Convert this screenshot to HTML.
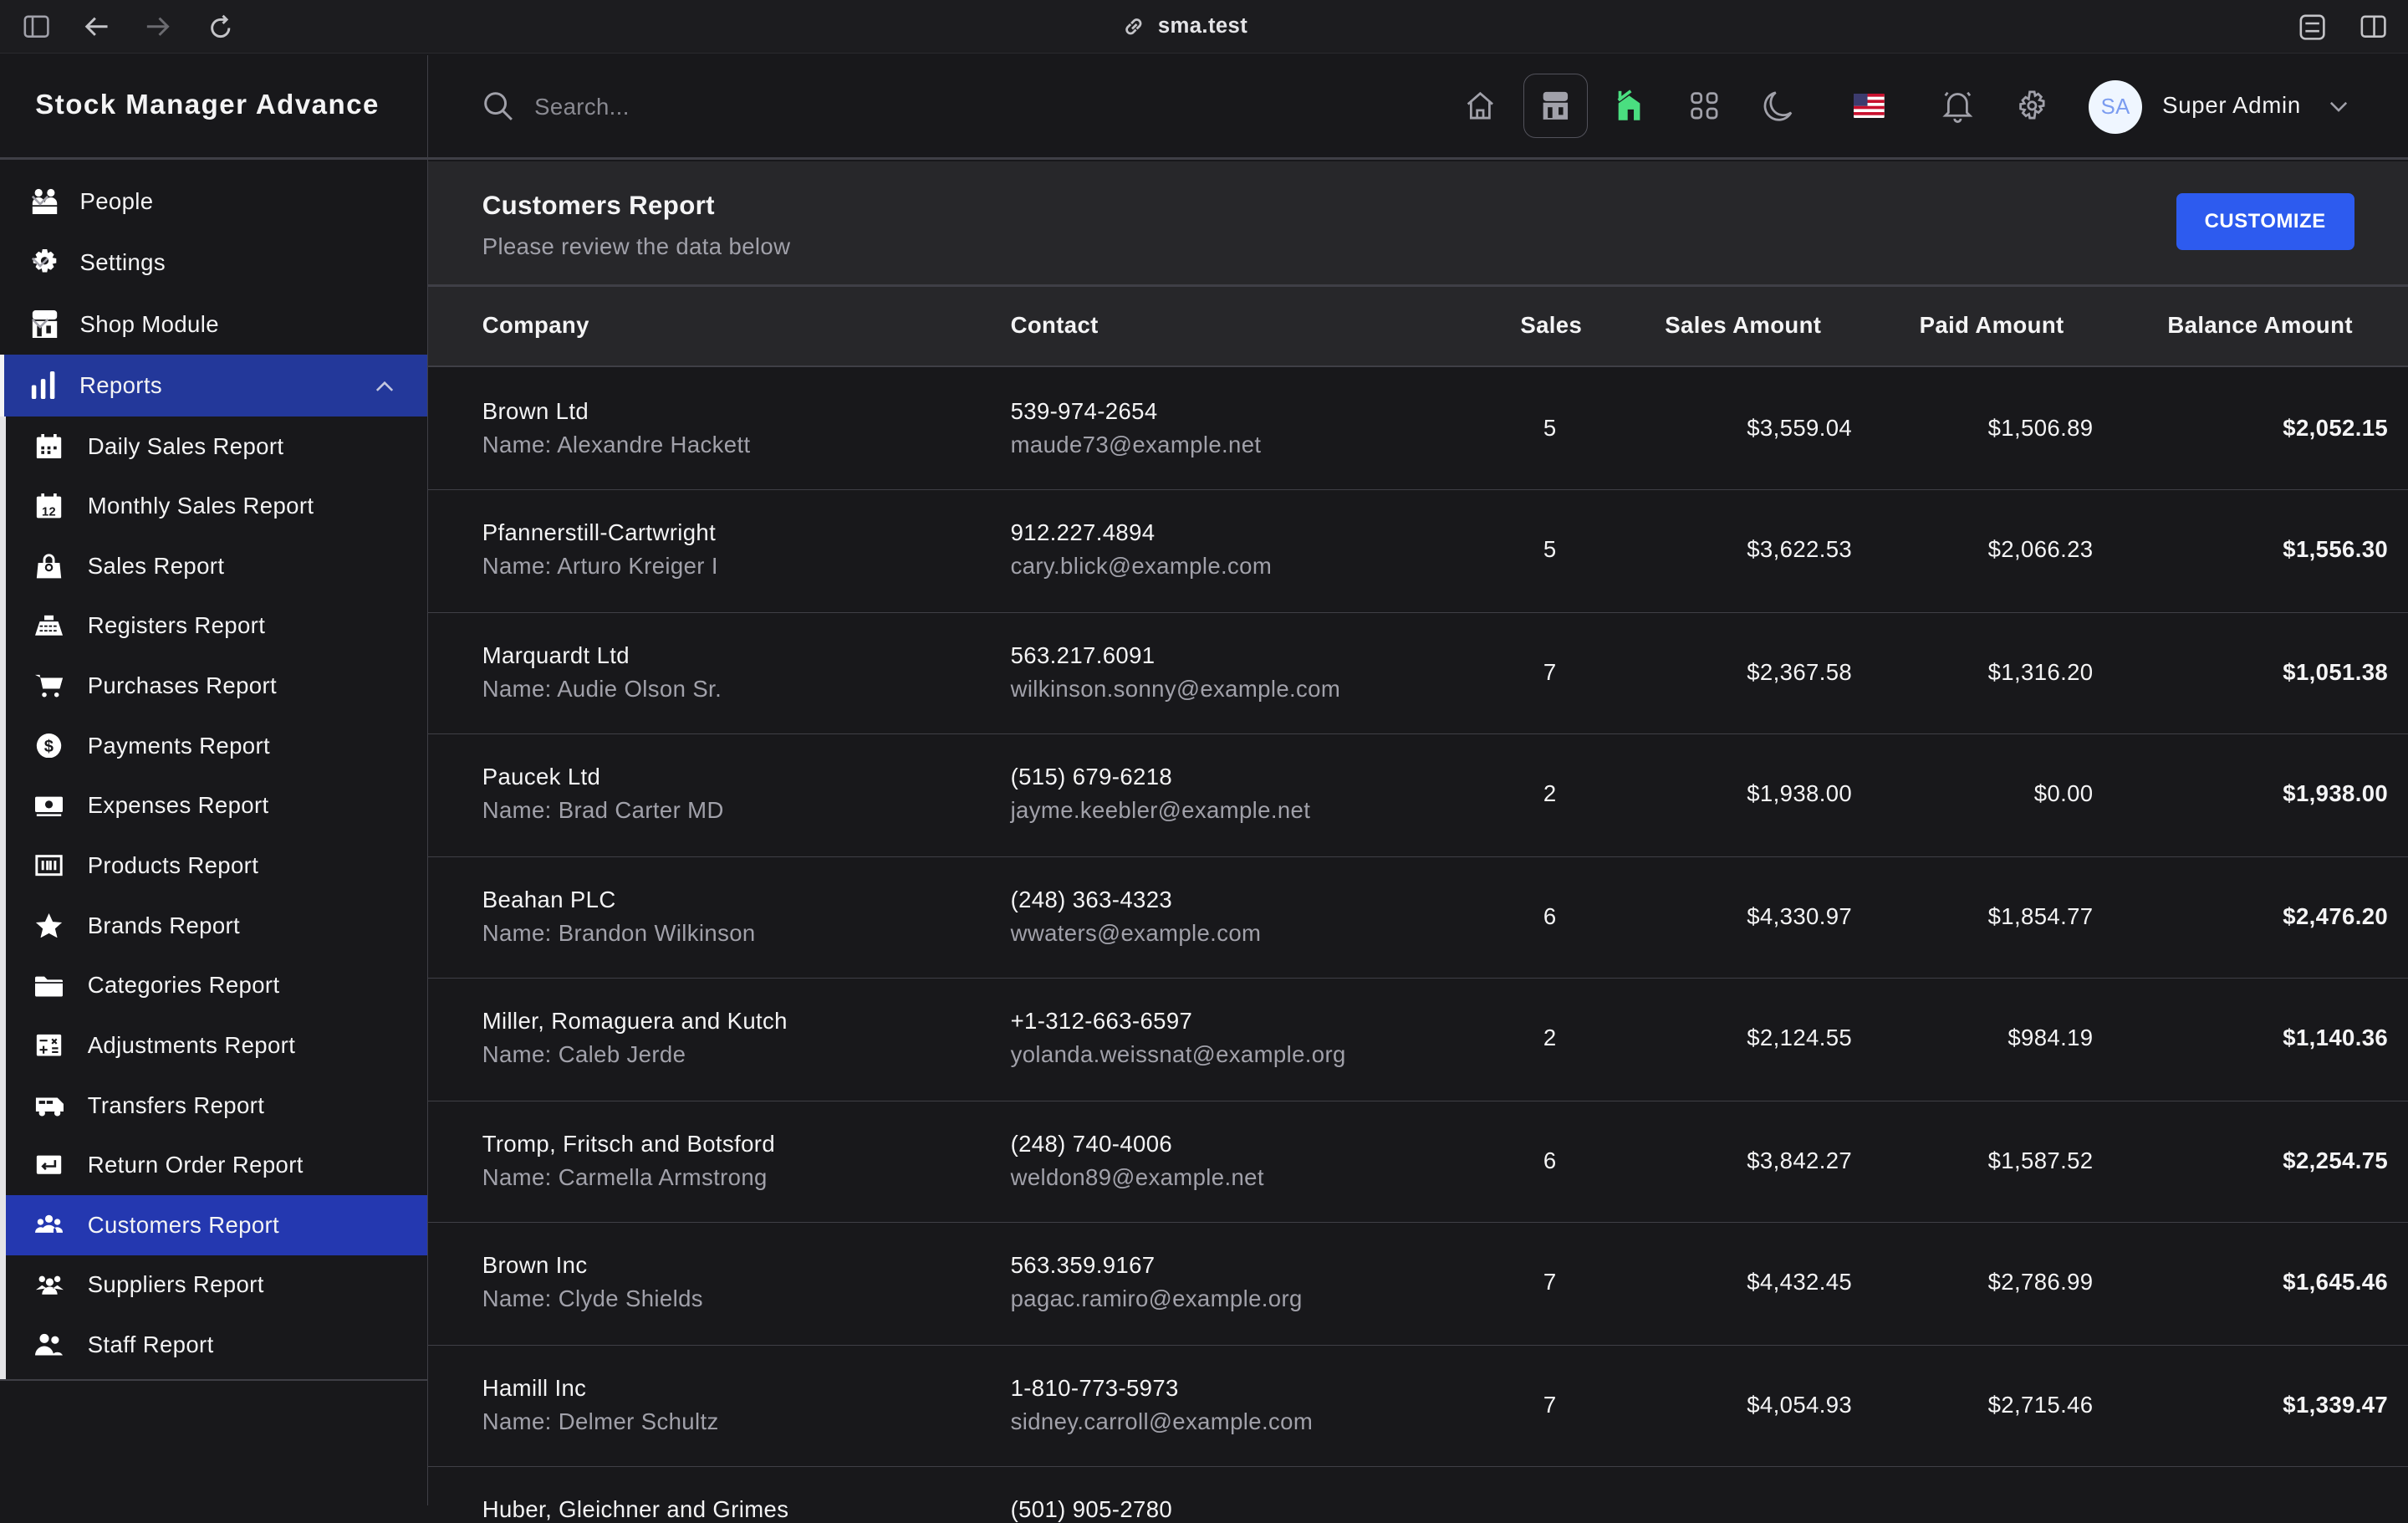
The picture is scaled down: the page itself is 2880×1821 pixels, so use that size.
<!DOCTYPE html>
<html><head><meta charset="utf-8"><style>
html{zoom:1.83673}
*{box-sizing:border-box;margin:0;padding:0}
body{width:1568px;height:980px;background:#18181b;font-family:"Liberation Sans",sans-serif;color:#f4f4f5;overflow:hidden;position:relative;letter-spacing:0.2px}
.abs{position:absolute}
.bb{top:0;left:0;width:1568px;height:35px;background:#1c1c1f;border-bottom:1px solid #2a2a2e}
.side{top:36px;left:0;width:279px;height:944px;border-right:1px solid #3f3f46;background:#18181b}
.logo{top:0;left:0;width:278px;height:68px;border-bottom:2px solid #3f3f46}
.nav{position:absolute;left:0;width:278px;height:40px;font-size:15px;display:flex;align-items:center}
.nav svg{position:absolute;left:20px}
.nav span{position:absolute;left:52px}
.chev{position:absolute;left:245px}
.sub{position:absolute;left:0;width:278px;height:39px;font-size:15px;display:flex;align-items:center}
.sub span{position:absolute;left:57px}
.sub .ic{position:absolute;left:23px;width:18px;height:16px}
.t{font-size:15px;position:absolute;white-space:nowrap}
.g{color:#a1a1aa}
.r{text-align:right}
.row{position:absolute;left:279px;width:1289px;height:80px;border-bottom:1px solid #3f3f46}
</style></head><body>
<div class="abs bb">
<svg class="abs" style="left:15px;top:10px" width="17" height="15" viewBox="0 0 17 15" fill="none" stroke="#a1a1aa" stroke-width="1.4"><rect x="1" y="1" width="15" height="13" rx="2"/><path d="M6 1v13"/></svg>
<svg class="abs" style="left:55px;top:10px" width="16" height="15" viewBox="0 0 16 15" fill="none" stroke="#c4c4c8" stroke-width="1.6"><path d="M15 7.5H2M7 2L1.5 7.5 7 13"/></svg>
<svg class="abs" style="left:95px;top:10px" width="16" height="15" viewBox="0 0 16 15" fill="none" stroke="#6b6b70" stroke-width="1.6"><path d="M1 7.5h13M9 2l5.5 5.5L9 13"/></svg>
<svg class="abs" style="left:136px;top:9px" width="16" height="17" viewBox="0 0 16 17" fill="none" stroke="#c4c4c8" stroke-width="1.6"><path d="M13 9a5.5 5.5 0 1 1-5.5-5.5H11M9 1l2.5 2.5L9 6"/></svg>
<svg class="abs" style="left:731px;top:10px" width="14" height="15" viewBox="0 0 14 15" fill="none" stroke="#c4c4c8" stroke-width="1.5"><path d="M6 9l3-3M5 6L3 8a2.5 2.5 0 0 0 3.5 3.5l2-2M9 9l2-2A2.5 2.5 0 0 0 7.5 3.5l-2 2"/></svg>
<div class="t" style="left:754px;top:9px;font-weight:bold;font-size:14px;color:#e4e4e7">sma.test</div>
<svg class="abs" style="left:1497px;top:9px" width="17" height="17" viewBox="0 0 17 17" fill="none" stroke="#c4c4c8" stroke-width="1.4"><rect x="1" y="1" width="15" height="15" rx="3"/><path d="M4 6h9M4 11h9"/></svg>
<svg class="abs" style="left:1537px;top:10px" width="17" height="15" viewBox="0 0 17 15" fill="none" stroke="#c4c4c8" stroke-width="1.4"><rect x="1" y="1" width="15" height="13" rx="2"/><path d="M9 1v13"/></svg>
</div>

<div class="abs side">
<div class="abs logo"><div class="t" style="left:23px;top:22px;font-size:18px;font-weight:bold;letter-spacing:0.8px">Stock Manager Advance</div></div>
<div class="nav" style="top:75px"><svg width="18" height="17" viewBox="0 0 18 17" fill="#fff"><circle cx="5" cy="3" r="2.5"/><circle cx="13" cy="3" r="2.5"/><path d="M1 10a4 4 0 0 1 8 0v1H1zM9 10a4 4 0 0 1 8 0v1H9zM1 12h16v5H1z"/></svg><span>People</span><svg class="chev" width="12" height="8" viewBox="0 0 12 8" fill="none" stroke="#a1a1aa" stroke-width="1.4"><path d="M1 1l5 5 5-5"/></svg></div>
<div class="nav" style="top:115px"><svg width="18" height="18" viewBox="0 0 18 18" fill="#fff"><path d="M7.5 0h3l.5 2.5 2-1 2 2-1 2 2.5.5v3L14 9.5l1 2-2 2-2-1-.5 2.5h-3L7 12.5l-2 1-2-2 1-2L1.5 9V6L4 5.5l-1-2 2-2 2 1z"/><circle cx="9" cy="7.5" r="2.5" fill="#18181b"/></svg><span>Settings</span><svg class="chev" width="12" height="8" viewBox="0 0 12 8" fill="none" stroke="#a1a1aa" stroke-width="1.4"><path d="M1 1l5 5 5-5"/></svg></div>
<div class="nav" style="top:155px"><svg width="18" height="18" viewBox="0 0 18 18" fill="#fff"><rect x="1" y="0" width="16" height="6" rx="2"/><path d="M1 7h16v11H1z"/><rect x="4" y="10" width="3" height="7" fill="#18181b"/><rect x="10" y="10" width="3" height="5" fill="#18181b"/></svg><span>Shop Module</span><svg class="chev" width="12" height="8" viewBox="0 0 12 8" fill="none" stroke="#a1a1aa" stroke-width="1.4"><path d="M1 1l5 5 5-5"/></svg></div>
<div class="nav" style="top:195px;background:#23389a;height:40px;border-left:3px solid #f4f4f5"><svg width="18" height="18" viewBox="0 0 18 18" fill="#fff" style="left:17px"><rect x="1" y="9" width="3" height="9" rx="1"/><rect x="7" y="5" width="3" height="13" rx="1"/><rect x="13" y="0" width="3" height="18" rx="1"/></svg><span style="left:49px">Reports</span><svg class="chev" width="12" height="8" viewBox="0 0 12 8" fill="none" stroke="#c4c8e0" stroke-width="1.4" style="left:242px"><path d="M1 7l5-5 5 5"/></svg></div>
<div class="abs" style="left:0;top:235px;width:4px;height:628px;background:#e4e4e7"></div>
<div class="abs" style="left:0;top:862px;width:278px;height:1px;background:#3f3f46"></div>
<div class="sub" style="top:235px"><svg class="ic" viewBox="0 0 18 16" fill="#fff"><rect x="1" y="2" width="16" height="14" rx="1"/><rect x="4" y="0" width="2" height="3"/><rect x="12" y="0" width="2" height="3"/><g fill="#18181b"><rect x="4" y="8" width="2" height="2"/><rect x="8" y="8" width="2" height="2"/><rect x="12" y="8" width="2" height="2"/><rect x="4" y="11" width="2" height="2"/><rect x="8" y="11" width="2" height="2"/></g></svg><span>Daily Sales Report</span></div>
<div class="sub" style="top:274px"><svg class="ic" viewBox="0 0 18 16" fill="#fff"><rect x="1" y="2" width="16" height="14" rx="1"/><rect x="4" y="0" width="2" height="3"/><rect x="12" y="0" width="2" height="3"/><text x="9" y="14.5" font-size="8" text-anchor="middle" fill="#18181b" font-weight="bold" font-family="Liberation Sans">12</text></svg><span>Monthly Sales Report</span></div>
<div class="sub" style="top:313px"><svg class="ic" viewBox="0 0 18 16" fill="#fff"><path d="M2 6h14l1 10H1z"/><path d="M6 6V4a3 3 0 0 1 6 0v2" fill="none" stroke="#fff" stroke-width="1.6"/><circle cx="9" cy="9" r="2" fill="none" stroke="#18181b" stroke-width="1.2"/></svg><span>Sales Report</span></div>
<div class="sub" style="top:352px"><svg class="ic" viewBox="0 0 18 16" fill="#fff"><rect x="6" y="1" width="6" height="3"/><path d="M3 5h12l3 9H0z"/><path d="M3 8h12M3 11h12" stroke="#18181b" stroke-width="1" stroke-dasharray="2 1"/></svg><span>Registers Report</span></div>
<div class="sub" style="top:391px"><svg class="ic" viewBox="0 0 18 16" fill="#fff"><path d="M0 1h3l2 9h11l2-7H4" /><path d="M4 3h14l-2 7H5z"/><circle cx="6" cy="14" r="1.5"/><circle cx="14" cy="14" r="1.5"/></svg><span>Purchases Report</span></div>
<div class="sub" style="top:430px"><svg class="ic" viewBox="0 0 18 16" fill="#fff"><circle cx="9" cy="8" r="8"/><text x="9" y="12" font-size="11" text-anchor="middle" fill="#18181b" font-weight="bold" font-family="Liberation Sans">$</text></svg><span>Payments Report</span></div>
<div class="sub" style="top:469px"><svg class="ic" viewBox="0 0 18 16" fill="#fff"><rect x="0" y="2" width="18" height="10" rx="1"/><circle cx="9" cy="7" r="2.5" fill="#18181b"/><path d="M1 14h16" stroke="#fff" stroke-width="1.4"/></svg><span>Expenses Report</span></div>
<div class="sub" style="top:508px"><svg class="ic" viewBox="0 0 18 16" fill="none" stroke="#fff" stroke-width="1.6"><rect x="1" y="2" width="16" height="12"/><path d="M5 5v6M8 5v6M10 5v6M13 5v6"/></svg><span>Products Report</span></div>
<div class="sub" style="top:547px"><svg class="ic" viewBox="0 0 18 16" fill="#fff"><path d="M9 0l2.5 5.5 6 .5-4.5 4 1.5 6L9 13l-5.5 3 1.5-6L.5 6l6-.5z"/></svg><span>Brands Report</span></div>
<div class="sub" style="top:586px"><svg class="ic" viewBox="0 0 18 16" fill="#fff"><path d="M0 3a1 1 0 0 1 1-1h5l2 2h9a1 1 0 0 1 1 1v9a1 1 0 0 1-1 1H1a1 1 0 0 1-1-1z"/><path d="M0 6h18" stroke="#18181b"/></svg><span>Categories Report</span></div>
<div class="sub" style="top:625px"><svg class="ic" viewBox="0 0 18 16" fill="#fff"><rect x="1" y="1" width="16" height="14" rx="1"/><path d="M3 5h5M11 4l3 3M14 4l-3 3M3 11h5M5.5 8.5v5M11 10h4M11 12.5h4" stroke="#18181b" stroke-width="1.2"/></svg><span>Adjustments Report</span></div>
<div class="sub" style="top:664px"><svg class="ic" viewBox="0 0 18 16" fill="#fff" style="width:19px"><path d="M0 3h14l4 4v5H0z"/><path d="M2 5h4v2H2zM7 5h4v2H7z" fill="#18181b"/><circle cx="4" cy="13" r="2"/><circle cx="14" cy="13" r="2"/></svg><span>Transfers Report</span></div>
<div class="sub" style="top:703px"><svg class="ic" viewBox="0 0 18 16" fill="#fff"><rect x="1" y="2" width="16" height="12" rx="1"/><path d="M13 5v4H5M7 7L5 9l2 2" stroke="#18181b" stroke-width="1.4" fill="none"/></svg><span>Return Order Report</span></div>
<div class="sub" style="top:742px;background:#2438b0;left:4px;width:274px"><svg class="ic" viewBox="0 0 18 16" fill="#fff" style="left:19px"><circle cx="9" cy="4" r="2.5"/><circle cx="3.5" cy="6" r="2"/><circle cx="14.5" cy="6" r="2"/><path d="M4 13a5 5 0 0 1 10 0zM0 13a3.5 3.5 0 0 1 6-2.5V13zM18 13a3.5 3.5 0 0 0-6-2.5V13z"/></svg><span style="left:53px">Customers Report</span></div>
<div class="sub" style="top:781px"><svg class="ic" viewBox="0 0 18 16" fill="#fff" style="width:19px"><circle cx="9" cy="6" r="2.5"/><circle cx="4" cy="4" r="2"/><circle cx="14" cy="4" r="2"/><path d="M4 14a5 5 0 0 1 10 0zM0 11l4-3 3 2zM18 11l-4-3-3 2z"/></svg><span>Suppliers Report</span></div>
<div class="sub" style="top:820px"><svg class="ic" viewBox="0 0 18 16" fill="#fff"><circle cx="6" cy="4" r="3"/><circle cx="13" cy="5" r="2.5"/><path d="M0 15a6 6 0 0 1 12 0zM11 15a4 4 0 0 1 7 0z"/></svg><span>Staff Report</span></div>
</div>

<div class="abs" style="left:279px;top:36px;width:1289px;height:68px;border-bottom:2px solid #3f3f46"></div>
<svg class="abs" style="left:314px;top:59px" width="20" height="20" viewBox="0 0 20 20" fill="none" stroke="#a1a1aa" stroke-width="1.6"><circle cx="8.5" cy="8.5" r="6.5"/><path d="M13.5 13.5L19 19"/></svg>
<div class="t g" style="left:348px;top:61px;color:#8a8a92">Search...</div>
<svg class="abs" style="left:954px;top:59px" width="20" height="20" viewBox="0 0 20 20" fill="none" stroke="#a1a1aa" stroke-width="1.5"><path d="M2 9L10 2l8 7M4 7.5V18h12V7.5M8 18v-5h4v5"/></svg>
<div class="abs" style="left:992px;top:48px;width:42px;height:42px;border:1px solid #52525b;border-radius:8px"></div>
<svg class="abs" style="left:1003px;top:59px" width="20" height="20" viewBox="0 0 20 20" fill="#a1a1aa"><rect x="2" y="1" width="16" height="6" rx="2"/><path d="M2 8h16v11H2z"/><rect x="5" y="11" width="3" height="7" fill="#18181b"/><rect x="12" y="11" width="3" height="5" fill="#18181b"/></svg>
<svg class="abs" style="left:1052px;top:58px" width="20" height="21" viewBox="0 0 20 21" fill="#4ade80"><path d="M2 20V9L9 4l7 5v11h-4v-7H8v7z"/><path d="M2 7L10 1" stroke="#4ade80" stroke-width="2"/><rect x="2" y="1" width="2" height="6"/></svg>
<svg class="abs" style="left:1100px;top:59px" width="20" height="20" viewBox="0 0 20 20" fill="none" stroke="#a1a1aa" stroke-width="1.5"><rect x="2" y="2" width="6" height="6" rx="2"/><rect x="12" y="2" width="6" height="6" rx="2"/><rect x="2" y="12" width="6" height="6" rx="2"/><rect x="12" y="12" width="6" height="6" rx="2"/></svg>
<svg class="abs" style="left:1148px;top:58px" width="20" height="21" viewBox="0 0 20 21" fill="none" stroke="#a1a1aa" stroke-width="1.5"><path d="M8 2a9 9 0 1 0 10 13A8 8 0 0 1 8 2z"/></svg>
<svg class="abs" style="left:1207px;top:61px" width="20" height="16" viewBox="0 0 20 16"><rect width="20" height="16" fill="#fff" rx="1"/><g fill="#c8102e"><rect y="0" width="20" height="2"/><rect y="4" width="20" height="2"/><rect y="8" width="20" height="2"/><rect y="12" width="20" height="2"/></g><rect width="9" height="8" fill="#3c3b6e"/></svg>
<svg class="abs" style="left:1265px;top:58px" width="20" height="22" viewBox="0 0 20 22" fill="none" stroke="#a1a1aa" stroke-width="1.5"><path d="M4 15V9a6 6 0 0 1 12 0v6l2 2H2zM8 19a2 2 0 0 0 4 0M2 4l1.5-2M18 4l-1.5-2"/></svg>
<svg class="abs" style="left:1313px;top:59px" width="20" height="20" viewBox="0 0 20 20" fill="none" stroke="#a1a1aa" stroke-width="1.5"><path d="M8.5 1h3l.5 2.5 2-1.2 2 2-1.2 2L17.5 7v3l-2.5.5 1.2 2-2 2-2-1.2L11.5 18h-3L8 15.5l-2 1.2-2-2 1.2-2L2.5 12V9l2.5-.5-1.2-2 2-2 2 1.2z"/><circle cx="10" cy="10" r="2.5"/></svg>
<div class="abs" style="left:1360px;top:52px;width:35px;height:35px;border-radius:50%;background:#eff6ff;color:#7b9cf0;font-size:14px;text-align:center;line-height:35px">SA</div>
<div class="t" style="left:1408px;top:60px;letter-spacing:0.4px">Super Admin</div>
<svg class="abs" style="left:1517px;top:66px" width="12" height="8" viewBox="0 0 12 8" fill="none" stroke="#a1a1aa" stroke-width="1.4"><path d="M1 1l5 5 5-5"/></svg>

<div class="abs" style="left:279px;top:105px;width:1289px;height:134px;background:#27272a"></div>
<div class="abs" style="left:279px;top:185px;width:1289px;height:2px;background:#3f3f46"></div>
<div class="abs" style="left:279px;top:238px;width:1289px;height:1px;background:#3f3f46"></div>
<div class="t" style="left:314px;top:124px;font-size:17px;font-weight:bold">Customers Report</div>
<div class="t g" style="left:314px;top:152px">Please review the data below</div>
<div class="abs" style="left:1417px;top:126px;width:116px;height:37px;background:#2d5bef;border-radius:4px;color:#fff;font-size:13px;font-weight:bold;text-align:center;line-height:37px;letter-spacing:0.3px">CUSTOMIZE</div>
<div class="t" style="left:314px;top:203px;font-weight:bold">Company</div>
<div class="t" style="left:658px;top:203px;font-weight:bold">Contact</div>
<div class="t" style="left:990px;top:203px;font-weight:bold">Sales</div>
<div class="t r" style="right:382px;top:203px;font-weight:bold">Sales Amount</div>
<div class="t r" style="right:224px;top:203px;font-weight:bold">Paid Amount</div>
<div class="t r" style="right:36px;top:203px;font-weight:bold">Balance Amount</div>

<div class="row" style="top:239px"></div>
<div class="t" style="left:314px;top:259px">Brown Ltd</div><div class="t g" style="left:314px;top:281px">Name: Alexandre Hackett</div><div class="t" style="left:658px;top:259px">539-974-2654</div><div class="t g" style="left:658px;top:281px">maude73@example.net</div><div class="t" style="left:1005px;top:270px">5</div><div class="t r" style="right:362px;top:270px">$3,559.04</div><div class="t r" style="right:205px;top:270px">$1,506.89</div><div class="t r" style="right:13px;top:270px;font-weight:bold">$2,052.15</div>
<div class="row" style="top:319px"></div>
<div class="t" style="left:314px;top:338px">Pfannerstill-Cartwright</div><div class="t g" style="left:314px;top:360px">Name: Arturo Kreiger I</div><div class="t" style="left:658px;top:338px">912.227.4894</div><div class="t g" style="left:658px;top:360px">cary.blick@example.com</div><div class="t" style="left:1005px;top:349px">5</div><div class="t r" style="right:362px;top:349px">$3,622.53</div><div class="t r" style="right:205px;top:349px">$2,066.23</div><div class="t r" style="right:13px;top:349px;font-weight:bold">$1,556.30</div>
<div class="row" style="top:398px"></div>
<div class="t" style="left:314px;top:418px">Marquardt Ltd</div><div class="t g" style="left:314px;top:440px">Name: Audie Olson Sr.</div><div class="t" style="left:658px;top:418px">563.217.6091</div><div class="t g" style="left:658px;top:440px">wilkinson.sonny@example.com</div><div class="t" style="left:1005px;top:429px">7</div><div class="t r" style="right:362px;top:429px">$2,367.58</div><div class="t r" style="right:205px;top:429px">$1,316.20</div><div class="t r" style="right:13px;top:429px;font-weight:bold">$1,051.38</div>
<div class="row" style="top:478px"></div>
<div class="t" style="left:314px;top:497px">Paucek Ltd</div><div class="t g" style="left:314px;top:519px">Name: Brad Carter MD</div><div class="t" style="left:658px;top:497px">(515) 679-6218</div><div class="t g" style="left:658px;top:519px">jayme.keebler@example.net</div><div class="t" style="left:1005px;top:508px">2</div><div class="t r" style="right:362px;top:508px">$1,938.00</div><div class="t r" style="right:205px;top:508px">$0.00</div><div class="t r" style="right:13px;top:508px;font-weight:bold">$1,938.00</div>
<div class="row" style="top:557px"></div>
<div class="t" style="left:314px;top:577px">Beahan PLC</div><div class="t g" style="left:314px;top:599px">Name: Brandon Wilkinson</div><div class="t" style="left:658px;top:577px">(248) 363-4323</div><div class="t g" style="left:658px;top:599px">wwaters@example.com</div><div class="t" style="left:1005px;top:588px">6</div><div class="t r" style="right:362px;top:588px">$4,330.97</div><div class="t r" style="right:205px;top:588px">$1,854.77</div><div class="t r" style="right:13px;top:588px;font-weight:bold">$2,476.20</div>
<div class="row" style="top:637px"></div>
<div class="t" style="left:314px;top:656px">Miller, Romaguera and Kutch</div><div class="t g" style="left:314px;top:678px">Name: Caleb Jerde</div><div class="t" style="left:658px;top:656px">+1-312-663-6597</div><div class="t g" style="left:658px;top:678px">yolanda.weissnat@example.org</div><div class="t" style="left:1005px;top:667px">2</div><div class="t r" style="right:362px;top:667px">$2,124.55</div><div class="t r" style="right:205px;top:667px">$984.19</div><div class="t r" style="right:13px;top:667px;font-weight:bold">$1,140.36</div>
<div class="row" style="top:716px"></div>
<div class="t" style="left:314px;top:736px">Tromp, Fritsch and Botsford</div><div class="t g" style="left:314px;top:758px">Name: Carmella Armstrong</div><div class="t" style="left:658px;top:736px">(248) 740-4006</div><div class="t g" style="left:658px;top:758px">weldon89@example.net</div><div class="t" style="left:1005px;top:747px">6</div><div class="t r" style="right:362px;top:747px">$3,842.27</div><div class="t r" style="right:205px;top:747px">$1,587.52</div><div class="t r" style="right:13px;top:747px;font-weight:bold">$2,254.75</div>
<div class="row" style="top:796px"></div>
<div class="t" style="left:314px;top:815px">Brown Inc</div><div class="t g" style="left:314px;top:837px">Name: Clyde Shields</div><div class="t" style="left:658px;top:815px">563.359.9167</div><div class="t g" style="left:658px;top:837px">pagac.ramiro@example.org</div><div class="t" style="left:1005px;top:826px">7</div><div class="t r" style="right:362px;top:826px">$4,432.45</div><div class="t r" style="right:205px;top:826px">$2,786.99</div><div class="t r" style="right:13px;top:826px;font-weight:bold">$1,645.46</div>
<div class="row" style="top:875px"></div>
<div class="t" style="left:314px;top:895px">Hamill Inc</div><div class="t g" style="left:314px;top:917px">Name: Delmer Schultz</div><div class="t" style="left:658px;top:895px">1-810-773-5973</div><div class="t g" style="left:658px;top:917px">sidney.carroll@example.com</div><div class="t" style="left:1005px;top:906px">7</div><div class="t r" style="right:362px;top:906px">$4,054.93</div><div class="t r" style="right:205px;top:906px">$2,715.46</div><div class="t r" style="right:13px;top:906px;font-weight:bold">$1,339.47</div>
<div class="t" style="left:314px;top:974px">Huber, Gleichner and Grimes</div><div class="t" style="left:658px;top:974px">(501) 905-2780</div>
</body></html>
